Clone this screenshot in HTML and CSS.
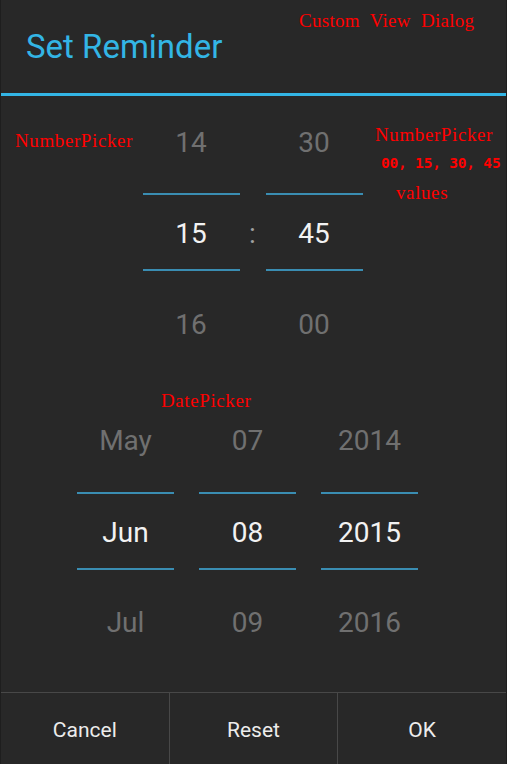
FILE: index.html
```html
<!DOCTYPE html>
<html lang="en">
  <head>
    <meta charset="UTF-8" />
    <title>Set Reminder</title>
    <link rel="stylesheet" href="styles.css">
  </head>
  <body>
    <div class="dialog">
      <div class="dialog-header">
        <h2>Set Reminder</h2>
      </div>
      <div class="accent-line"></div>

      <!-- time picker: hours : minutes -->
      <div class="time-row">
        <div class="picker">
          <div class="cell prev">14</div>
          <div class="cell current">15</div>
          <div class="cell next">16</div>
        </div>
        <div class="colon">:</div>
        <div class="picker">
          <div class="cell prev">30</div>
          <div class="cell current">45</div>
          <div class="cell next">00</div>
        </div>
      </div>

      <!-- date picker: month / day / year -->
      <div class="date-row">
        <div class="picker">
          <div class="cell prev">May</div>
          <div class="cell current">Jun</div>
          <div class="cell next">Jul</div>
        </div>
        <div class="picker">
          <div class="cell prev">07</div>
          <div class="cell current">08</div>
          <div class="cell next">09</div>
        </div>
        <div class="picker">
          <div class="cell prev">2014</div>
          <div class="cell current">2015</div>
          <div class="cell next">2016</div>
        </div>
      </div>

      <div class="buttons">
        <button class="dlg-btn">Cancel</button>
        <button class="dlg-btn">Reset</button>
        <button class="dlg-btn">OK</button>
      </div>

      <!-- annotations -->
      <span class="note note-dialog">Custom View Dialog</span>
      <span class="note note-left">NumberPicker</span>
      <div class="note note-right">
        <div>NumberPicker</div>
        <div class="note-mono">00, 15, 30, 45</div>
        <div class="note-values">values</div>
      </div>
      <span class="note note-date">DatePicker</span>
    </div>
  </body>
</html>
```

FILE: styles.css
```css
* {
  box-sizing: border-box;
}

body {
  margin: 0;
  padding: 0;
  background-color: #1c1c1c;
  font-family: Roboto, "Noto Sans", sans-serif;
}

.dialog {
  position: relative;
  width: 507px;
  height: 764px;
  background-color: #282828;
  border-left: 1px solid #1e1e1e;
  border-right: 1px solid #1e1e1e;
  display: flex;
  flex-direction: column;
}

.dialog-header {
  height: 93px;
  padding-left: 25px;
  padding-bottom: 1px;
  display: flex;
  align-items: center;
}

.dialog-header h2 {
  margin: 0;
  font-size: 33px;
  font-weight: normal;
  color: #33b5e5;
}

.accent-line {
  height: 3px;
  background-color: #33b5e5;
}

.time-row,
.date-row {
  display: flex;
  justify-content: center;
}

.time-row {
  padding-right: 2px;
}

.date-row {
  gap: 25px;
  padding-right: 12px;
}

.picker {
  width: 97px;
  display: flex;
  flex-direction: column;
}

.cell {
  display: flex;
  align-items: center;
  justify-content: center;
  font-size: 28px;
  color: #707070;
}

.cell.current {
  height: 78px;
  padding-top: 3px;
  color: #f2f2f2;
  border-top: 2px solid #3a8db2;
  border-bottom: 2px solid #3a8db2;
}

.time-row .prev {
  height: 97px;
  padding-bottom: 5px;
}

.time-row .next {
  height: 106px;
}

.colon {
  width: 26px;
  height: 78px;
  margin-top: 97px;
  padding-top: 3px;
  display: flex;
  align-items: center;
  justify-content: center;
  font-size: 28px;
  color: #a0a0a0;
}

.date-row .prev {
  height: 115px;
  padding-top: 11px;
}

.date-row .current {
  padding-top: 2px;
}

.date-row .next {
  height: 104px;
}

.buttons {
  margin-top: auto;
  display: flex;
  border-top: 1px solid #484848;
}

.dlg-btn {
  flex: 1;
  height: 71px;
  background: none;
  border: none;
  border-left: 1px solid #484848;
  color: #ececec;
  font-family: Roboto, "Noto Sans", sans-serif;
  font-size: 21px;
  padding: 3px 0 0 0;
}

.dlg-btn:first-child {
  border-left: none;
}

/* red annotation labels drawn over the screenshot */
.note {
  position: absolute;
  color: #ff0000;
  font-family: "Liberation Serif", serif;
  font-size: 19px;
  line-height: 1;
  letter-spacing: 0.6px;
}

.note-dialog {
  top: 11px;
  left: 298px;
  letter-spacing: 0.3px;
  word-spacing: 5px;
}

.note-left {
  top: 131px;
  left: 14px;
}

.note-right {
  top: 125px;
  left: 374px;
}

.note-mono {
  margin-top: 12px;
  margin-left: 6px;
  font-family: "DejaVu Sans Mono", monospace;
  font-weight: bold;
  font-size: 14.5px;
  letter-spacing: -0.2px;
}

.note-values {
  margin-top: 12px;
  margin-left: 21px;
}

.note-date {
  top: 391px;
  left: 160px;
}
```
